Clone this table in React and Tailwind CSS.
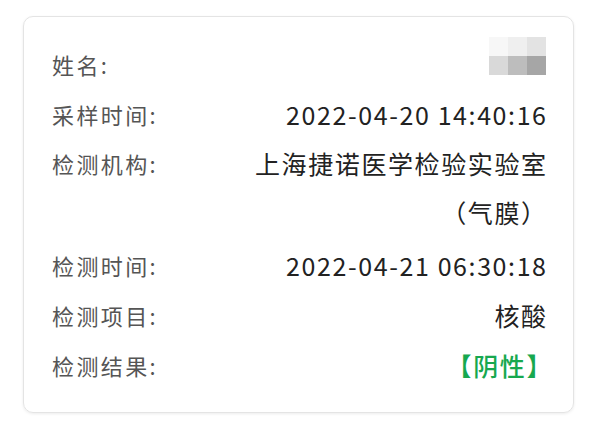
const rows = [
  { label: "检测时间:", value: "2022-04-21 06:30:18" },
  { label: "检测项目:", value: "核酸" },
];

function Label({ children }) {
  return <span className="text-[#555555] text-[22px] tracking-[2.4px]">{children}</span>;
}

function Value({ children, className = "text-[#222222] -mr-[1.6px]" }) {
  return <span className={`text-[25px] tracking-[1.6px] ${className}`}>{children}</span>;
}

function Row({ label, children }) {
  return (
    <div className="flex justify-between items-start h-[50px] leading-[50px]">
      <Label>{label}</Label>
      {children}
    </div>
  );
}

function Mosaic() {
  const cells = ["#f7f7f7", "#efefef", "#e3e3e3", "#d9d9d9", "#bdbdbd", "#a6a6a6"];
  return (
    <div className="grid grid-cols-3 w-[57px] h-[38px] -mt-[2px]">
      {cells.map((c, i) => (
        <div key={i} style={{ backgroundColor: c }} />
      ))}
    </div>
  );
}

export default function App() {
  return (
    <div
      className="w-[600px] h-[433px] bg-white pt-[16px] pl-[23px]"
      style={{ fontFamily: '"Noto Sans CJK SC", "Noto Sans", sans-serif' }}
    >
      <div className="w-[551px] h-[397px] rounded-[10px] border border-[#e4e4e4] shadow-[0_1px_3px_rgba(0,0,0,0.08)] pt-[22px] pl-[28px] pr-[27px]">
        <Row label="姓名:">
          <Mosaic />
        </Row>
        <Row label="采样时间:">
          <Value>2022-04-20 14:40:16</Value>
        </Row>
        <div className="flex justify-between items-start leading-[49px]">
          <Label>检测机构:</Label>
          <div className="flex flex-col items-end">
            <Value>上海捷诺医学检验实验室</Value>
            <Value>（气膜）</Value>
          </div>
        </div>
        <div className="h-[3px]" />
        {rows.map((r) => (
          <Row key={r.label} label={r.label}>
            <Value>{r.value}</Value>
          </Row>
        ))}
        <Row label="检测结果:">
          <Value className="text-[#17a84f] font-medium -mr-[7px]">【阴性】</Value>
        </Row>
      </div>
    </div>
  );
}
